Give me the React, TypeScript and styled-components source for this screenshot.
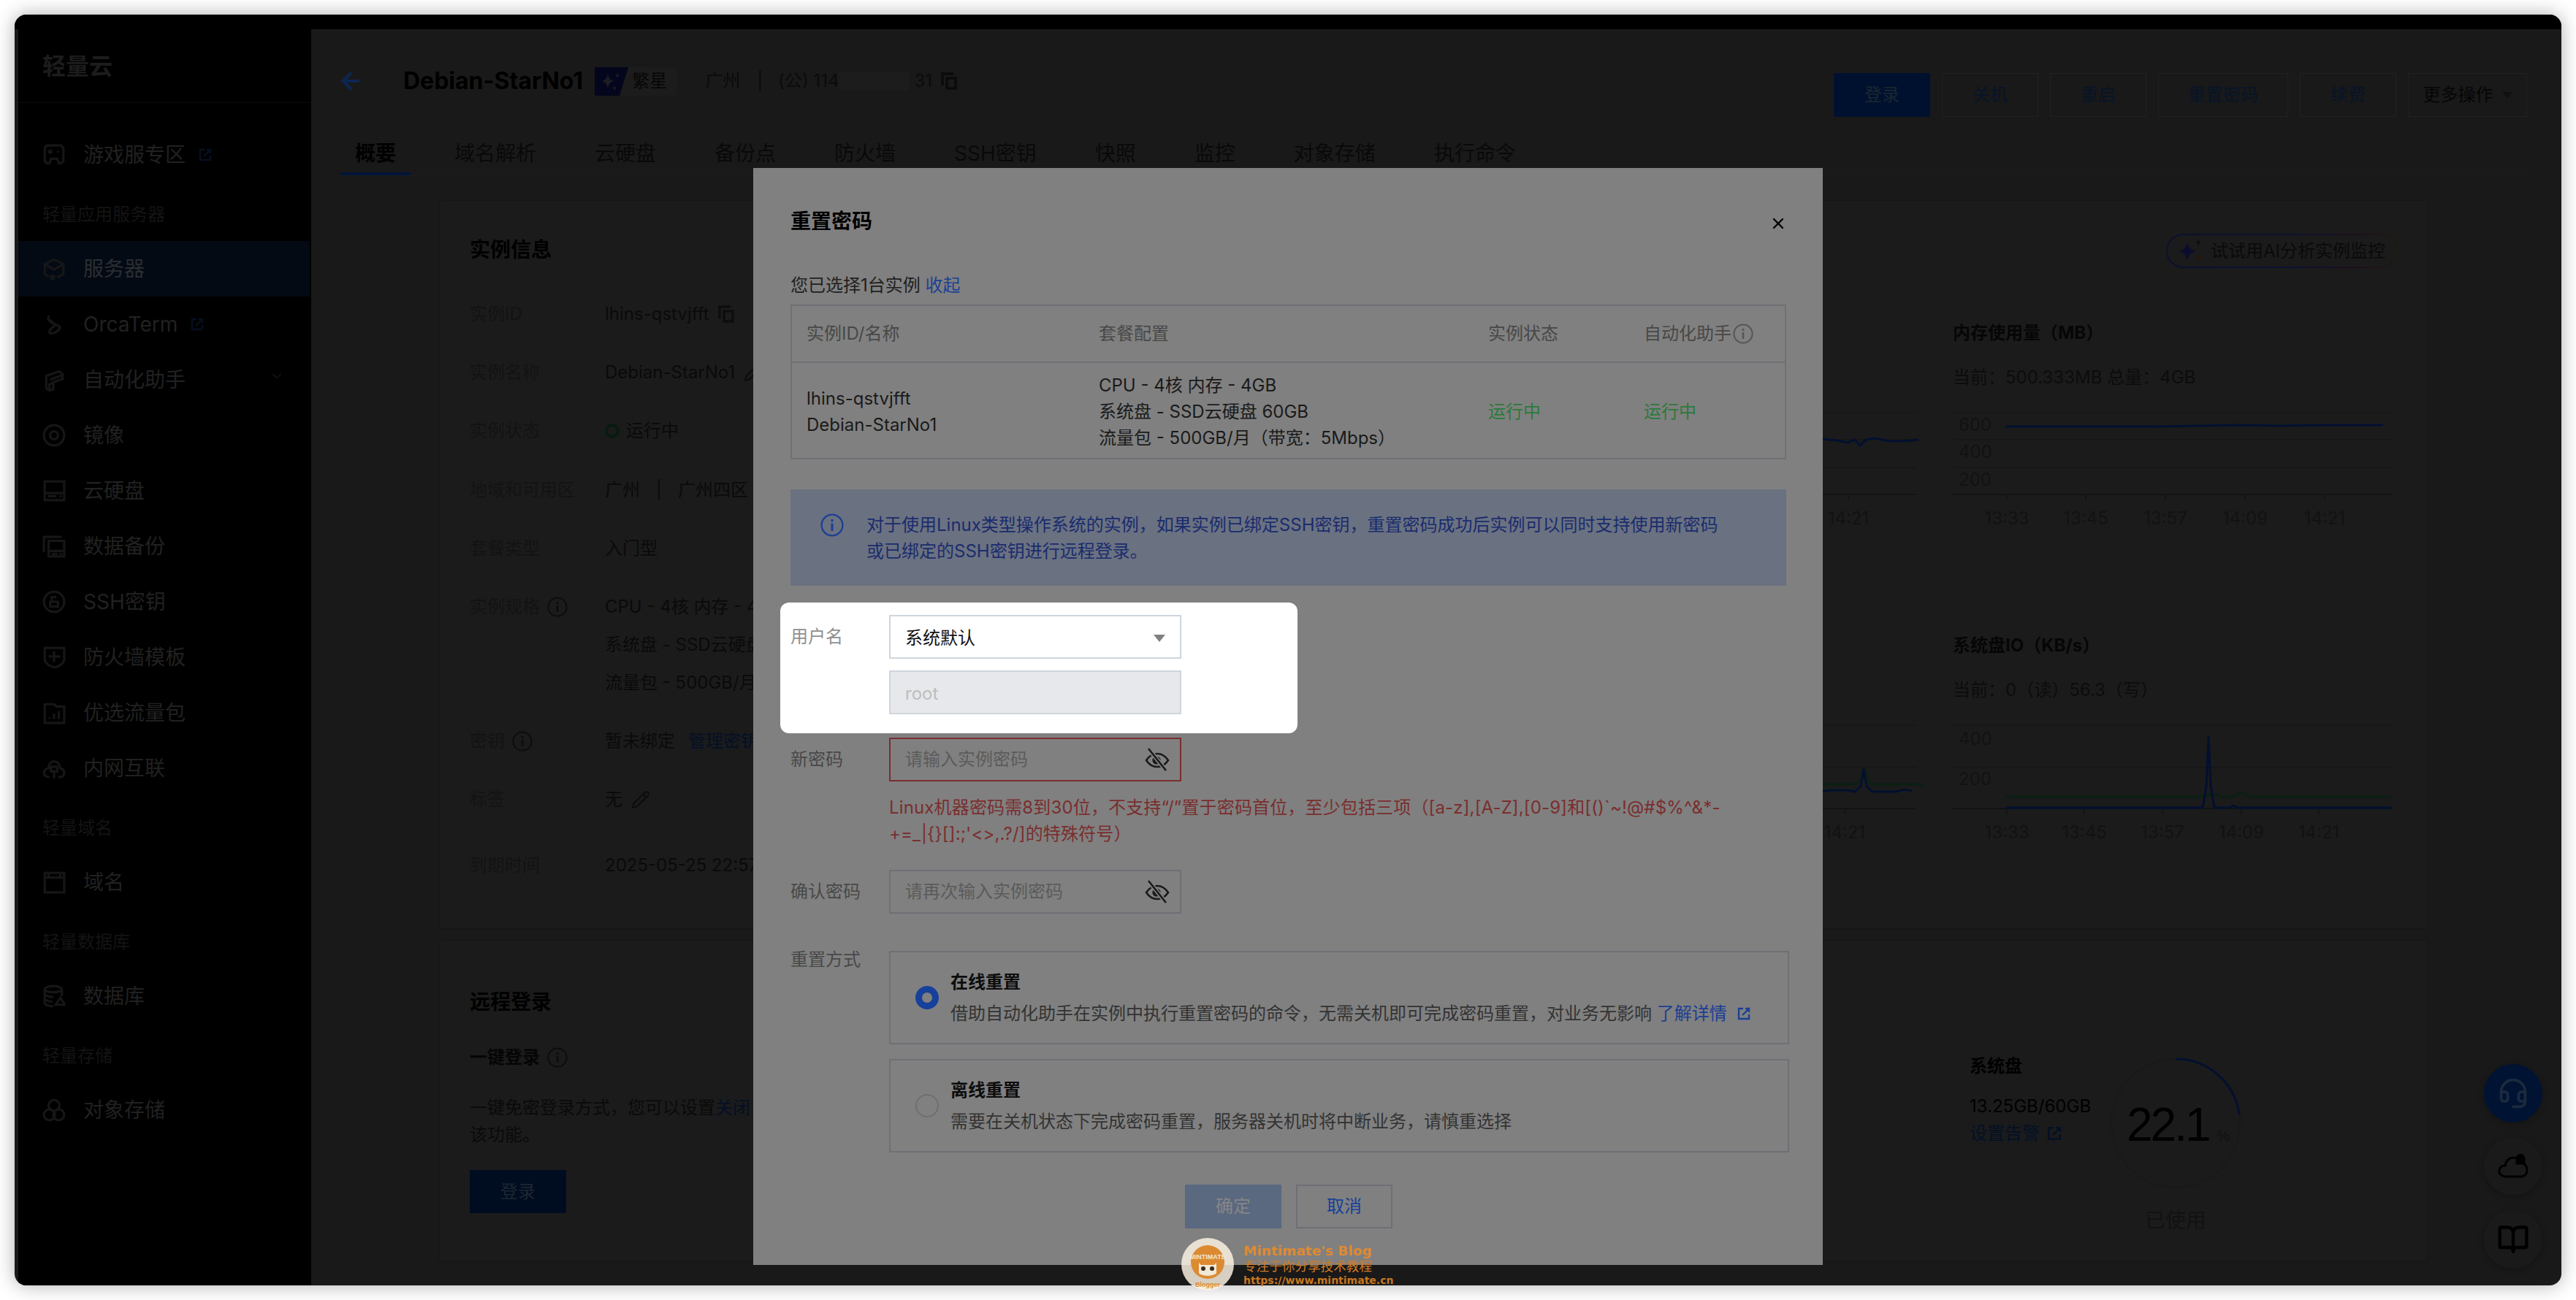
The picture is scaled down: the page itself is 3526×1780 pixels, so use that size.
import React from "react";
import styled, { createGlobalStyle } from "styled-components";
import { ArrowLeft, BookOpen, ChevronDown, Headset, Pencil, X } from "lucide-react";

const GlobalStyle = createGlobalStyle`
  html, body {
    margin: 0;
    padding: 0;
    background: #fff;
    overflow: hidden;
  }
  * { box-sizing: border-box; }
  #root {
    font-family: "Inter", "Noto Sans CJK SC", sans-serif;
    font-size: 24px;
    line-height: 36px;
  }
`;

type IconName =
  | "game" | "server" | "orca" | "auto" | "mirror" | "disk" | "backup" | "ssh"
  | "firewall" | "traffic" | "intranet" | "domain" | "db" | "oss";

function NavGlyph({ name }: { name: IconName }) {
  const body: Record<IconName, React.ReactNode> = {
    game: (
      <>
        <path d="M6 3h18l3 3v17l-3 3h-3l-2-6h-8l-2 6H6l-3-3V6z" />
        <path d="M7 11h6M10 8v6M20 10v2" />
      </>
    ),
    server: (
      <>
        <path d="M8 25l-5-3V9l12-6 12 6v13l-8 4" />
        <path d="M3 9l12 7 12-7" />
        <circle cx="13" cy="26" r="2" />
      </>
    ),
    orca: <path d="M9 4c-3 3-1 7 3 9l9 4c3 2 1 5-2 7-4 3-10 4-10 1 0-3 5-7 8-9l-8-7" />,
    auto: (
      <>
        <path d="M5 10l17-6 4 4v6l-12 4v9l-5 2-4-3V10z" />
        <path d="M10 15l16-6M14 19l-5 2v7" />
      </>
    ),
    mirror: (
      <>
        <circle cx="15" cy="15" r="13" />
        <circle cx="15" cy="15" r="5" />
      </>
    ),
    disk: (
      <>
        <rect x="3" y="3" width="25" height="24" />
        <path d="M3 18h25M7 22h11M22 22h3" />
      </>
    ),
    backup: (
      <>
        <path d="M2 22V3h23" />
        <rect x="8" y="8" width="20" height="20" />
        <path d="M8 21h20M12 25h7M22 25h3" />
      </>
    ),
    ssh: (
      <>
        <circle cx="15" cy="15" r="13" />
        <path d="M12 14V9h6M10 15h10v6H10z" />
      </>
    ),
    firewall: (
      <>
        <path d="M3 3h25v14c0 6-7 10-12 11C10 27 3 23 3 17z" />
        <path d="M8 14h15M15 7v14" />
      </>
    ),
    traffic: (
      <>
        <path d="M3 4h12l3 3h10v21H3z" />
        <path d="M9 23v-2M15 23v-7M21 23V13" />
      </>
    ),
    intranet: (
      <>
        <path d="M9 26H7c-7-2-6-10 1-11 0-12 14-12 15 0 6 1 7 9 1 11h-4" />
        <rect x="11" y="13" width="8" height="6" />
        <path d="M15 19v9" />
      </>
    ),
    domain: (
      <>
        <rect x="3" y="3" width="25" height="25" />
        <path d="M3 9h25M8 3v6M23 3v6" />
      </>
    ),
    db: (
      <>
        <ellipse cx="14" cy="6" rx="11" ry="4" />
        <path d="M3 6v18c0 2 5 4 11 4M25 6v9M3 12c0 2 5 4 11 4M3 18c0 2 5 4 10 4" />
        <path d="M23 17l6 9H17z" />
      </>
    ),
    oss: (
      <>
        <circle cx="15" cy="9" r="7" />
        <circle cx="9" cy="21" r="7" />
        <circle cx="21" cy="21" r="7" />
      </>
    ),
  };
  return (
    <GlyphSvg viewBox="0 0 30 30">{body[name]}</GlyphSvg>
  );
}

function LinkOut({ size = 18 }: { size?: number }) {
  return (
    <svg width={size} height={size} viewBox="0 0 18 18" fill="none" stroke="currentColor" strokeWidth="2.4">
      <path d="M8 2H2v14h14v-6" />
      <path d="M7 11l9-9M11 2h5v5" />
    </svg>
  );
}

function CopyGlyph() {
  return (
    <svg width="22" height="24" viewBox="0 0 22 24" fill="none" stroke="currentColor" strokeWidth="3.4">
      <path d="M2 18V2h15" />
      <rect x="8" y="8" width="12" height="14" />
    </svg>
  );
}

function InfoDot({ size = 28 }: { size?: number }) {
  return (
    <svg width={size} height={size} viewBox="0 0 28 28" fill="none" stroke="currentColor" strokeWidth="2">
      <circle cx="14" cy="14" r="12.6" />
      <path d="M14 12v9" strokeWidth="2.6" />
      <path d="M14 7v3" strokeWidth="2.6" />
    </svg>
  );
}

function EyeSlash() {
  return (
    <svg width="34" height="34" viewBox="0 0 34 34" fill="none" stroke="#1a1a1a" strokeWidth="2.6">
      <path d="M2 18c4-6 9-9 15-9s11 3 15 9c-4 6-9 9-15 9s-11-3-15-9z" />
      <circle cx="16" cy="18" r="5.6" fill="#1a1a1a" stroke="none" />
      <path d="M5 2l24 30" stroke="#808080" strokeWidth="6" />
      <path d="M5 2l24 30" />
    </svg>
  );
}

type NavEntry =
  | { kind: "group"; label: string }
  | { kind: "item"; label: string; icon: IconName; active?: boolean; out?: boolean; more?: boolean };

const nav: NavEntry[] = [
  { kind: "item", label: "游戏服专区", icon: "game", out: true },
  { kind: "group", label: "轻量应用服务器" },
  { kind: "item", label: "服务器", icon: "server", active: true },
  { kind: "item", label: "OrcaTerm", icon: "orca", out: true },
  { kind: "item", label: "自动化助手", icon: "auto", more: true },
  { kind: "item", label: "镜像", icon: "mirror" },
  { kind: "item", label: "云硬盘", icon: "disk" },
  { kind: "item", label: "数据备份", icon: "backup" },
  { kind: "item", label: "SSH密钥", icon: "ssh" },
  { kind: "item", label: "防火墙模板", icon: "firewall" },
  { kind: "item", label: "优选流量包", icon: "traffic" },
  { kind: "item", label: "内网互联", icon: "intranet" },
  { kind: "group", label: "轻量域名" },
  { kind: "item", label: "域名", icon: "domain" },
  { kind: "group", label: "轻量数据库" },
  { kind: "item", label: "数据库", icon: "db" },
  { kind: "group", label: "轻量存储" },
  { kind: "item", label: "对象存储", icon: "oss" },
];

const tabs = ["概要", "域名解析", "云硬盘", "备份点", "防火墙", "SSH密钥", "快照", "监控", "对象存储", "执行命令"];

function Sidebar() {
  return (
    <SideBar>
      <Brand>轻量云</Brand>
      <NavList>
        {nav.map((entry) =>
          entry.kind === "group" ? (
            <NavGroup key={entry.label}>{entry.label}</NavGroup>
          ) : (
            <NavItem key={entry.label} $active={entry.active}>
              <NavGlyph name={entry.icon} />
              {entry.label}
              {entry.out && (
                <NavOut>
                  <LinkOut />
                </NavOut>
              )}
              {entry.more && (
                <NavMore>
                  <ChevronDown size={22} strokeWidth={2} />
                </NavMore>
              )}
            </NavItem>
          )
        )}
      </NavList>
    </SideBar>
  );
}

function PageHeader() {
  return (
    <HeaderRow>
      <HeaderLeft>
        <BackArrow>
          <ArrowLeft size={36} strokeWidth={2.8} />
        </BackArrow>
        <InstanceName>Debian-StarNo1</InstanceName>
        <StarBadge>
          <svg width="46" height="39" viewBox="0 0 46 39">
            <polygon points="0,0 46,0 34,39 0,39" fill="#03061c" />
            <path d="M18 8c1 7 3 10 9 11-6 1-8 4-9 11-1-7-3-10-9-11 6-1 8-4 9-11z" fill="#1c1c22" />
            <path d="M31 7c.5 3 1 4 3 4.500-2 .5-2.500 1.500-3 4.500-.5-3-1-4-3-4.500 2-.5 2.500-1.500 3-4.500z" fill="#1c1c22" />
            <path d="M27 24c.5 3 1 4 3 4.500-2 .5-2.500 1.500-3 4.500-.5-3-1-4-3-4.500 2-.5 2.500-1.500 3-4.500z" fill="#1c1c22" />
          </svg>
          <BadgeLabel>繁星</BadgeLabel>
        </StarBadge>
        <HeaderMeta>广州</HeaderMeta>
        <HeaderPipe>|</HeaderPipe>
        <HeaderMeta>(公) 114</HeaderMeta>
        <IpMask />
        <HeaderMeta>31</HeaderMeta>
        <HeaderCopy>
          <CopyGlyph />
        </HeaderCopy>
      </HeaderLeft>
      <HeaderActions>
        <ActionButton $primary>登录</ActionButton>
        <ActionButton>关机</ActionButton>
        <ActionButton>重启</ActionButton>
        <ActionButton $wide>重置密码</ActionButton>
        <ActionButton>续费</ActionButton>
        <MoreButton>
          更多操作
          <MoreCaret />
        </MoreButton>
      </HeaderActions>
    </HeaderRow>
  );
}

function InstanceInfo() {
  return (
    <InfoColumn>
      <CardTitle>实例信息</CardTitle>
      <InfoRows>
        <InfoRow>
          <InfoLabel>实例ID</InfoLabel>
          <InfoValue>
            lhins-qstvjfft
            <InlineIcon>
              <CopyGlyph />
            </InlineIcon>
          </InfoValue>
        </InfoRow>
        <InfoRow>
          <InfoLabel>实例名称</InfoLabel>
          <InfoValue>
            Debian-StarNo1
            <InlineIcon>
              <Pencil size={26} strokeWidth={2} />
            </InlineIcon>
          </InfoValue>
        </InfoRow>
        <InfoRow>
          <InfoLabel>实例状态</InfoLabel>
          <InfoValue>
            <StatusRing />
            运行中
          </InfoValue>
        </InfoRow>
        <InfoRow>
          <InfoLabel>地域和可用区</InfoLabel>
          <InfoValue>
            广州<RegionPipe>|</RegionPipe>广州四区
          </InfoValue>
        </InfoRow>
        <InfoRow>
          <InfoLabel>套餐类型</InfoLabel>
          <InfoValue>入门型</InfoValue>
        </InfoRow>
        <InfoRow>
          <InfoLabel>
            实例规格
            <LabelInfo>
              <InfoDot />
            </LabelInfo>
          </InfoLabel>
          <SpecLines>
            <InfoValue>CPU - 4核 内存 - 4GB</InfoValue>
            <InfoValue>系统盘 - SSD云硬盘 60GB</InfoValue>
            <InfoValue>流量包 - 500GB/月（带宽：5Mbps）</InfoValue>
          </SpecLines>
        </InfoRow>
        <InfoRow>
          <InfoLabel>
            密钥
            <LabelInfo>
              <InfoDot />
            </LabelInfo>
          </InfoLabel>
          <InfoValue>
            暂未绑定<DarkLink>管理密钥</DarkLink>
          </InfoValue>
        </InfoRow>
        <TagRow>
          <InfoLabel>标签</InfoLabel>
          <InfoValue>
            无
            <InlineIcon>
              <Pencil size={26} strokeWidth={2} />
            </InlineIcon>
          </InfoValue>
        </TagRow>
        <InfoRow>
          <InfoLabel>到期时间</InfoLabel>
          <InfoValue>2025-05-25 22:57:10</InfoValue>
        </InfoRow>
      </InfoRows>
    </InfoColumn>
  );
}

function Axis({ ticks, y, lines }: { ticks: [number, string][]; y: number; lines: number[] }) {
  return (
    <>
      {lines.map((l) => (
        <line key={l} x1="0" x2="601" y1={l} y2={l} stroke="#171717" strokeWidth="1.5" />
      ))}
      <line x1="0" x2="601" y1={y} y2={y} stroke="#131313" strokeWidth="2" />
      {ticks.map(([x, label]) => (
        <g key={label}>
          <line x1={x} x2={x} y1={y} y2={y + 8} stroke="#131313" strokeWidth="1.5" />
          <ChartText x={x} y={y + 41} textAnchor="middle">
            {label}
          </ChartText>
        </g>
      ))}
    </>
  );
}

function ChartBlock({ title, sub, children }: { title?: string; sub?: string; children: React.ReactNode }) {
  return (
    <ChartWrap>
      <ChartTitle>{title ?? "\u00a0"}</ChartTitle>
      <ChartSub>{sub ?? "\u00a0"}</ChartSub>
      <ChartSvg viewBox="0 0 601 165">{children}</ChartSvg>
    </ChartWrap>
  );
}

const memTicks: [number, string][] = [
  [74, "13:33"],
  [182, "13:45"],
  [291, "13:57"],
  [400, "14:09"],
  [509, "14:21"],
];
const ioTicks: [number, string][] = [
  [74, "13:33"],
  [180, "13:45"],
  [287, "13:57"],
  [395, "14:09"],
  [501, "14:21"],
];

function MonitorColumn() {
  return (
    <MonitorWrap>
      <AiRow>
        <AiPill>
          <svg width="36" height="36" viewBox="0 0 36 36">
            <path d="M13 5c1.500 8 4 11 12 13-8 2-10.500 5-12 13-1.500-8-4-11-12-13 8-2 10.500-5 12-13z" fill="#0a0d2e" />
            <path d="M28 1c.6 3 1.500 4 4 5-2.500.6-3.400 2-4 5-.6-3-1.500-4.400-4-5 2.500-1 3.400-2 4-5z" fill="#0d0d14" />
            <path d="M30 22c.6 3 1.500 4 4 5-2.500.6-3.400 2-4 5-.6-3-1.500-4.400-4-5 2.500-1 3.400-2 4-5z" fill="#2a1408" />
          </svg>
          试试用AI分析实例监控
        </AiPill>
      </AiRow>
      <ChartGrid>
        <ChartBlock>
          <Axis lines={[0, 37, 75]} y={112} ticks={[[508, "14:21"]]} />
          <ChartLine $color="#021030" d="M60 36H472l20 2 15 3 10-4 7 8 8-8 12-2 20 4 20 0 20-2" />
        </ChartBlock>
        <ChartBlock title="内存使用量（MB）" sub="当前：500.333MB 总量：4GB">
          <Axis lines={[0, 37, 75]} y={112} ticks={memTicks} />
          <ChartText x="8" y="25">600</ChartText>
          <ChartText x="8" y="62">400</ChartText>
          <ChartText x="8" y="100">200</ChartText>
          <ChartLine $color="#021030" d="M72 19H200l80 0 60-1 50-1 60 1 60-1 60 0 19 0" />
        </ChartBlock>
        <ChartBlock>
          <Axis lines={[0, 58]} y={114} ticks={[[503, "14:21"]]} />
          <ChartLine $color="#0a2012" d="M60 81H470l35 0 15-1 6-6 4-14 4 14 6 7h64l6 3" />
          <ChartLine $color="#021030" d="M60 90H475l12-1 20 0 10 2 8-8 4-23 4 23 6 7 6 1h28l12-3 10 2" />
        </ChartBlock>
        <ChartBlock title="系统盘IO（KB/s）" sub="当前：0（读）56.3（写）">
          <Axis lines={[0, 58]} y={114} ticks={ioTicks} />
          <ChartText x="8" y="27">400</ChartText>
          <ChartText x="8" y="82">200</ChartText>
          <ChartLine $color="#0a2012" d="M72 98H340l12-3 8 0 10 3 15 0 10-7 10 7H601" />
          <ChartLine $color="#021030" d="M72 113H342l5-30 3-68 3 68 5 30h20l6-3 6 3H601" />
        </ChartBlock>
      </ChartGrid>
    </MonitorWrap>
  );
}

function RemoteCard() {
  return (
    <LowerCard>
      <RemoteColumn>
        <CardTitle>远程登录</CardTitle>
        <RemoteHead>
          一键登录
          <LabelInfo>
            <InfoDot />
          </LabelInfo>
        </RemoteHead>
        <RemoteDesc>
          一键免密登录方式，您可以设置<DarkInline>关闭</DarkInline>
          <br />
          该功能。
        </RemoteDesc>
        <LoginButton>登录</LoginButton>
      </RemoteColumn>
      <DiskPanel>
        <DiskInfo>
          <DiskTitle>系统盘</DiskTitle>
          <DiskSize>13.25GB/60GB</DiskSize>
          <DiskLink>
            设置告警
            <LinkOut size={20} />
          </DiskLink>
        </DiskInfo>
        <GaugeColumn>
          <GaugeBox>
            <svg width="180" height="180" viewBox="0 0 180 180" fill="none">
              <circle cx="90" cy="90" r="88" stroke="#191919" strokeWidth="2" />
              <path d="M90 2A88 88 0 0 1 177.300 78" stroke="#021030" strokeWidth="3" />
            </svg>
            <GaugeValue>
              22.1<GaugeUnit>%</GaugeUnit>
            </GaugeValue>
          </GaugeBox>
          <GaugeCaption>已使用</GaugeCaption>
        </GaugeColumn>
      </DiskPanel>
    </LowerCard>
  );
}

function ResetDialog() {
  return (
    <Dialog>
      <DialogHead>
        <DialogTitle>重置密码</DialogTitle>
        <CloseMark>
          <X size={24} strokeWidth={2.4} />
        </CloseMark>
      </DialogHead>
      <PickedLine>
        您已选择1台实例 <BlueLink>收起</BlueLink>
      </PickedLine>
      <PickedTable>
        <HeadCell>实例ID/名称</HeadCell>
        <HeadCell>套餐配置</HeadCell>
        <HeadCell>实例状态</HeadCell>
        <HeadCell>
          自动化助手
          <HeadInfo>
            <InfoDot />
          </HeadInfo>
        </HeadCell>
        <BodyCell>
          <div>lhins-qstvjfft</div>
          <div>Debian-StarNo1</div>
        </BodyCell>
        <BodyCell>
          <div>CPU - 4核 内存 - 4GB</div>
          <div>系统盘 - SSD云硬盘 60GB</div>
          <div>流量包 - 500GB/月（带宽：5Mbps）</div>
        </BodyCell>
        <BodyCell $ok>运行中</BodyCell>
        <BodyCell $ok>运行中</BodyCell>
      </PickedTable>
      <Notice>
        <NoticeIcon>
          <InfoDot size={32} />
        </NoticeIcon>
        <div>
          对于使用Linux类型操作系统的实例，如果实例已绑定SSH密钥，重置密码成功后实例可以同时支持使用新密码
          <br />
          或已绑定的SSH密钥进行远程登录。
        </div>
      </Notice>
      <Spotlight>
        <FieldLabel $light>用户名</FieldLabel>
        <FieldStack>
          <SelectBox>
            系统默认
            <SelectCaret />
          </SelectBox>
          <DisabledBox>root</DisabledBox>
        </FieldStack>
      </Spotlight>
      <FormRow>
        <FieldLabel>新密码</FieldLabel>
        <InputBox $error>
          请输入实例密码
          <EyeSlash />
        </InputBox>
      </FormRow>
      <ErrorText>
        Linux机器密码需8到30位，不支持“/”置于密码首位，至少包括三项（[a-z],[A-Z],[0-9]和[()`~!@#$%^&*-
        <br />
        +=_|{"{}"}[]:;'&lt;&gt;,.?/]的特殊符号）
      </ErrorText>
      <ConfirmRow>
        <FieldLabel>确认密码</FieldLabel>
        <InputBox>
          请再次输入实例密码
          <EyeSlash />
        </InputBox>
      </ConfirmRow>
      <ModeRow>
        <ModeLabel>重置方式</ModeLabel>
        <ModeList>
          <ModeCard>
            <RadioMark $on />
            <div>
              <ModeName>在线重置</ModeName>
              <ModeDesc>
                借助自动化助手在实例中执行重置密码的命令，无需关机即可完成密码重置，对业务无影响
                <BlueLink> 了解详情</BlueLink>
                <ModeOut>
                  <LinkOut />
                </ModeOut>
              </ModeDesc>
            </div>
          </ModeCard>
          <ModeCard>
            <RadioMark />
            <div>
              <ModeName>离线重置</ModeName>
              <ModeDesc>需要在关机状态下完成密码重置，服务器关机时将中断业务，请慎重选择</ModeDesc>
            </div>
          </ModeCard>
        </ModeList>
      </ModeRow>
      <DialogFooter>
        <OkButton>确定</OkButton>
        <CancelButton>取消</CancelButton>
      </DialogFooter>
    </Dialog>
  );
}

export default function App() {
  return (
    <Page>
      <GlobalStyle />
      <AppWindow>
        <TopStrip />
        <Body>
          <Sidebar />
          <Main>
            <PageHeader />
            <TabBar>
              {tabs.map((t, i) => (
                <Tab key={t} $active={i === 0}>
                  {t}
                </Tab>
              ))}
            </TabBar>
            <Content>
              <UpperCard>
                <InstanceInfo />
                <MonitorColumn />
              </UpperCard>
              <RemoteCard />
            </Content>
          </Main>
        </Body>
        <ResetDialog />
        <FloatStack>
          <FloatButton $primary>
            <Headset size={44} strokeWidth={2} color="#1b2a3d" />
          </FloatButton>
          <FloatButton>
            <svg width="44" height="44" viewBox="0 0 44 44" fill="none" stroke="#000" strokeWidth="3">
              <path d="M13 36C5 36 2 31 3 27c1-4 4-6 8-6 1-7 6-11 12-11 2 0 4 .5 6 1.500M31 17c6 0 10 4 10 10 0 5-3 9-9 9H13" />
              <path d="M27 13c0-4 2-7 5-7s5 3 5 7v5H27z" fill="#000" />
            </svg>
          </FloatButton>
          <FloatButton>
            <BookOpen size={44} strokeWidth={2.4} color="#000" />
          </FloatButton>
        </FloatStack>
      </AppWindow>
      <Watermark>
        <svg width="72" height="72" viewBox="0 0 72 72">
          <circle cx="36" cy="36" r="36" fill="rgba(250,242,226,0.84)" />
          <circle cx="36" cy="33" r="23" fill="#dc8a32" />
          <text x="36" y="29" textAnchor="middle" fontSize="9" fontWeight="700" fill="#f1e8d8" fontFamily="Liberation Sans, sans-serif">
            MINTIMATE
          </text>
          <path d="M24 34l3 3h18l3-3v14c-4 5-20 5-24 0z" fill="#f1e8d8" />
          <circle cx="30" cy="42" r="3" fill="#3a2a1a" />
          <circle cx="42" cy="42" r="3" fill="#3a2a1a" />
          <text x="36" y="67" textAnchor="middle" fontSize="9" fontWeight="700" fill="#dc8a32" fontFamily="Liberation Sans, sans-serif">
            Blogger
          </text>
        </svg>
        <WatermarkText>
          <WatermarkName>Mintimate's Blog</WatermarkName>
          <WatermarkSlogan>专注于你分享技术教程</WatermarkSlogan>
          <WatermarkUrl>https://www.mintimate.cn</WatermarkUrl>
        </WatermarkText>
      </Watermark>
    </Page>
  );
}

const Page = styled.div`
  position: relative;
  width: 3526px;
  height: 1780px;
  padding: 20px;
  background: #fff;
  overflow: hidden;
`;

const AppWindow = styled.div`
  position: relative;
  width: 3486px;
  height: 1740px;
  border-radius: 16px;
  background: #191919;
  box-shadow: 0 0 26px rgba(0, 0, 0, 0.32);
  overflow: hidden;
  display: flex;
  flex-direction: column;
`;

const TopStrip = styled.div`
  height: 20px;
  flex: none;
  background: #000;
`;

const Body = styled.div`
  flex: 1;
  display: flex;
  padding-left: 5px;
  min-height: 0;
`;

const SideBar = styled.aside`
  width: 401px;
  flex: none;
  background: #000;
`;

const Brand = styled.div`
  height: 101px;
  padding: 2px 0 0 33px;
  display: flex;
  align-items: center;
  font-size: 32px;
  font-weight: 700;
  color: #1c1c1c;
  border-bottom: 1px solid #0a0a0a;
`;

const NavList = styled.nav`
  margin-top: 33px;
`;

const NavGroup = styled.div`
  height: 80px;
  padding: 26px 0 0 33px;
  font-size: 24px;
  color: #141414;
`;

const NavItem = styled.div<{ $active?: boolean }>`
  position: relative;
  height: 76px;
  width: 399px;
  padding-left: 33px;
  display: flex;
  align-items: center;
  gap: 24px;
  font-size: 28px;
  color: ${(p) => (p.$active ? "#2b2e33" : "#212121")};
  background: ${(p) => (p.$active ? "#040a14" : "transparent")};
`;

const GlyphSvg = styled.svg`
  width: 32px;
  height: 32px;
  flex: none;
  fill: none;
  stroke: #161616;
  stroke-width: 3;
`;

const NavOut = styled.span`
  display: flex;
  margin-left: -6px;
  color: #060f20;
`;

const NavMore = styled.span`
  position: absolute;
  right: 34px;
  top: 22px;
  display: flex;
  color: #0f0f0f;
`;

const Main = styled.main`
  flex: 1;
  min-width: 0;
  padding: 0 47px 0 40px;
`;

const HeaderRow = styled.div`
  display: flex;
  justify-content: space-between;
  align-items: flex-start;
  padding-top: 50px;
`;

const HeaderLeft = styled.div`
  display: flex;
  align-items: center;
  height: 40px;
  padding-top: 2px;
  color: #0b0b0b;
`;

const BackArrow = styled.span`
  display: flex;
  width: 88px;
  margin-left: -4px;
  color: #0c2650;
`;

const InstanceName = styled.span`
  font-size: 32px;
  font-weight: 700;
  color: #000;
  margin-right: 16px;
  margin-left: 2px;
`;

const StarBadge = styled.span`
  display: flex;
  align-items: center;
  width: 112px;
  height: 39px;
  background: #1c1c1c;
  margin-right: 39px;
`;

const BadgeLabel = styled.span`
  margin-left: 5px;
  font-size: 24px;
  color: #060606;
`;

const HeaderMeta = styled.span`
  font-size: 24px;
  color: #0b0b0b;
`;

const HeaderPipe = styled(HeaderMeta)`
  margin: 0 21px 0 23px;
`;

const IpMask = styled.span`
  width: 96px;
  height: 24px;
  margin: 0 7px 0 0;
  background: #1c1c1c;
`;

const HeaderCopy = styled.span`
  display: flex;
  margin-left: 12px;
  color: #0a0a0a;
`;

const HeaderActions = styled.div`
  display: flex;
  gap: 16px;
  margin-top: 10px;
`;

const ActionButton = styled.button<{ $primary?: boolean; $wide?: boolean }>`
  width: ${(p) => (p.$wide ? "178px" : "132px")};
  height: 60px;
  padding: 0;
  font: inherit;
  border: 1px solid ${(p) => (p.$primary ? "#00112f" : "#212121")};
  background: ${(p) => (p.$primary ? "#00112f" : "transparent")};
  color: ${(p) => (p.$primary ? "#1d2732" : "#071428")};
`;

const MoreButton = styled(ActionButton)`
  width: 163px;
  color: #060606;
  display: flex;
  align-items: center;
  justify-content: center;
  gap: 12px;
`;

const MoreCaret = styled.span`
  width: 0;
  height: 0;
  border-left: 7px solid transparent;
  border-right: 7px solid transparent;
  border-top: 9px solid #101010;
`;

const TabBar = styled.div`
  display: flex;
  gap: 40px;
  margin-top: 20px;
  border-bottom: 1px solid #1c1c1c;
`;

const Tab = styled.div<{ $active?: boolean }>`
  height: 60px;
  padding: 4px 20px 0;
  font-size: 28px;
  line-height: 52px;
  color: ${(p) => (p.$active ? "#000" : "#090909")};
  font-weight: ${(p) => (p.$active ? 600 : 400)};
  border-bottom: 4px solid ${(p) => (p.$active ? "#02153a" : "transparent")};
`;

const Content = styled.div`
  width: 2720px;
  margin: 34px 0 0 136px;
  display: flex;
  flex-direction: column;
  gap: 18px;
`;

const UpperCard = styled.section`
  height: 995px;
  padding: 47px 48px 0 41px;
  background: #1b1b1b;
  box-shadow: 0 0 3px rgba(0, 0, 0, 0.22);
  display: flex;
  justify-content: space-between;
`;

const CardTitle = styled.h2`
  margin: 0;
  font-size: 28px;
  line-height: 40px;
  font-weight: 700;
  color: #000;
`;

const InfoColumn = styled.div`
  width: 390px;
  overflow: hidden;
  white-space: nowrap;
`;

const InfoRows = styled.div`
  margin-top: 50px;
  display: flex;
  flex-direction: column;
  gap: 44.2px;
`;

const InfoRow = styled.div`
  display: grid;
  grid-template-columns: 185px 1fr;
  align-items: start;
`;

const TagRow = styled(InfoRow)`
  height: 45px;
`;

const InfoLabel = styled.div`
  display: flex;
  align-items: center;
  color: #131313;
`;

const LabelInfo = styled.span`
  display: flex;
  margin-left: 10px;
  color: #0d0d0d;
`;

const InfoValue = styled.div`
  display: flex;
  align-items: center;
  color: #0a0a0a;
`;

const RegionPipe = styled.span`
  margin: 0 22px;
`;

const InlineIcon = styled.span`
  display: flex;
  margin-left: 12px;
  color: #0d0d0d;
`;

const StatusRing = styled.span`
  width: 20px;
  height: 20px;
  margin-right: 9px;
  border-radius: 50%;
  border: 4px solid #061c0e;
`;

const SpecLines = styled.div`
  display: flex;
  flex-direction: column;
  gap: 16px;
`;

const DarkLink = styled.span`
  margin-left: 18px;
  color: #041026;
`;

const MonitorWrap = styled.div`
  width: 1252px;
`;

const AiRow = styled.div`
  display: flex;
  justify-content: flex-end;
  margin: -2px -8px 0 0;
`;

const AiPill = styled.div`
  width: 317px;
  height: 47px;
  padding-left: 14px;
  display: flex;
  align-items: center;
  gap: 9px;
  border-radius: 24px;
  border: 2px solid transparent;
  background: linear-gradient(#1b1b1b, #1b1b1b) padding-box,
    linear-gradient(90deg, #0a102e 0%, #0c1232 55%, #20101a 85%, #1e1a0e 100%) border-box;
  color: #0a0a0a;
  font-size: 24px;
  white-space: nowrap;
`;

const ChartGrid = styled.div`
  margin-top: 71px;
  display: grid;
  grid-template-columns: 601px 601px;
  column-gap: 50px;
  row-gap: 136px;
`;

const ChartWrap = styled.div`
  width: 601px;
`;

const ChartTitle = styled.div`
  font-weight: 700;
  color: #060606;
`;

const ChartSub = styled.div`
  margin-top: 25px;
  color: #0c0c0c;
`;

const ChartSvg = styled.svg`
  display: block;
  width: 601px;
  height: 165px;
  margin-top: 30px;
  overflow: visible;
`;

const ChartText = styled.text`
  font-family: "Inter", sans-serif;
  font-size: 24px;
  fill: #121212;
`;

const ChartLine = styled.path<{ $color: string }>`
  fill: none;
  stroke: ${(p) => p.$color};
  stroke-width: 3;
`;

const LowerCard = styled.section`
  height: 438px;
  padding: 64px 0 0 41px;
  background: #1b1b1b;
  box-shadow: 0 0 3px rgba(0, 0, 0, 0.22);
  display: flex;
  justify-content: space-between;
`;

const RemoteColumn = styled.div`
  width: 390px;
  white-space: nowrap;
`;

const RemoteHead = styled.div`
  margin-top: 38px;
  display: flex;
  align-items: center;
  font-weight: 700;
  color: #050505;
`;

const RemoteDesc = styled.div`
  margin-top: 32px;
  line-height: 37px;
  color: #0a0a0a;
`;

const DarkInline = styled.span`
  color: #041026;
`;

const LoginButton = styled.button`
  display: block;
  width: 132px;
  height: 59px;
  margin-top: 30px;
  padding: 0;
  border: 0;
  font: inherit;
  background: #000c20;
  color: #1d2732;
`;

const DiskPanel = styled.div`
  width: 669px;
  height: 258px;
  margin-top: 76px;
  padding-left: 42px;
  border-left: 1px solid #181818;
  display: flex;
`;

const DiskInfo = styled.div`
  width: 187px;
  flex: none;
  padding-top: 14px;
`;

const DiskTitle = styled.div`
  font-weight: 700;
  color: #000;
`;

const DiskSize = styled.div`
  margin-top: 19px;
  color: #000;
  white-space: nowrap;
`;

const DiskLink = styled.div`
  margin-top: 1px;
  display: flex;
  align-items: center;
  gap: 10px;
  color: #041026;
`;

const GaugeColumn = styled.div`
  width: 190px;
  padding-top: 20px;
  display: flex;
  flex-direction: column;
  align-items: center;
`;

const GaugeBox = styled.div`
  position: relative;
  width: 180px;
  height: 180px;
`;

const GaugeValue = styled.div`
  position: absolute;
  left: 23px;
  top: 54px;
  display: flex;
  align-items: baseline;
  font-family: "Liberation Sans", sans-serif;
  font-size: 64px;
  line-height: 76px;
  letter-spacing: -3px;
  color: #000;
`;

const GaugeUnit = styled.span`
  margin-left: 11px;
  font-size: 20px;
  letter-spacing: 0;
  color: #111;
`;

const GaugeCaption = styled.div`
  margin-top: 25px;
  font-size: 28px;
  color: #121212;
`;

const FloatStack = styled.div`
  position: absolute;
  right: 26px;
  bottom: 23px;
  display: flex;
  flex-direction: column;
  gap: 20px;
`;

const FloatButton = styled.div<{ $primary?: boolean }>`
  width: 80px;
  height: 80px;
  border-radius: 50%;
  display: flex;
  align-items: center;
  justify-content: center;
  background: ${(p) => (p.$primary ? "#001333" : "#1a1a1a")};
  box-shadow: 0 2px 8px rgba(0, 0, 0, 0.25);
`;

const Dialog = styled.div`
  position: absolute;
  left: 1011px;
  top: 210px;
  width: 1464px;
  height: 1502px;
  padding: 53px 50px 0 51px;
  background: #808080;
  color: #1a1a1a;
`;

const DialogHead = styled.div`
  display: flex;
  justify-content: space-between;
  align-items: center;
`;

const DialogTitle = styled.div`
  font-size: 28px;
  line-height: 40px;
  font-weight: 700;
  color: #000;
`;

const CloseMark = styled.span`
  display: flex;
  margin: 6px -1px 0 0;
  color: #000;
`;

const PickedLine = styled.div`
  margin-top: 50px;
  color: #202020;
`;

const BlueLink = styled.span`
  color: #1c3f94;
`;

const PickedTable = styled.div`
  margin-top: 8px;
  height: 212px;
  display: grid;
  grid-template-columns: 400px 533px 213px 1fr;
  grid-template-rows: 78px 1fr;
  border: 2px solid #6f6f75;
`;

const HeadCell = styled.div`
  display: flex;
  align-items: center;
  padding-left: 20px;
  border-bottom: 2px solid #6f6f75;
  color: #484848;
`;

const HeadInfo = styled.span`
  display: flex;
  margin-left: 2px;
  color: #555;
`;

const BodyCell = styled.div<{ $ok?: boolean }>`
  display: flex;
  flex-direction: column;
  justify-content: center;
  padding: 3px 0 0 20px;
  color: ${(p) => (p.$ok ? "#2b7a3b" : "#1a1a1a")};
`;

const Notice = styled.div`
  margin-top: 41px;
  height: 132px;
  padding: 31px 0 0 41px;
  display: flex;
  gap: 31px;
  background: #6a7180;
  color: #1a2c6e;
`;

const NoticeIcon = styled.span`
  display: flex;
  height: 36px;
  align-items: center;
  color: #1c3f94;
`;

const Spotlight = styled.div`
  margin: 23px 0 6px -14px;
  width: 708px;
  padding: 17px 14px 26px;
  display: flex;
  background: #fff;
  border-radius: 12px;
`;

const FormRow = styled.div`
  display: flex;
`;

const FieldLabel = styled.div<{ $light?: boolean }>`
  width: 135px;
  flex: none;
  padding-top: 12px;
  color: ${(p) => (p.$light ? "#8f8f8f" : "#484848")};
`;

const FieldStack = styled.div`
  display: flex;
  flex-direction: column;
  gap: 16px;
`;

const SelectBox = styled.div`
  position: relative;
  width: 400px;
  height: 60px;
  padding: 3px 0 0 20px;
  display: flex;
  align-items: center;
  border: 2px solid #cfd5de;
  color: #111;
`;

const SelectCaret = styled.span`
  position: absolute;
  right: 20px;
  top: 25px;
  width: 0;
  height: 0;
  border-left: 8px solid transparent;
  border-right: 8px solid transparent;
  border-top: 10px solid #808080;
`;

const DisabledBox = styled(SelectBox)`
  background: #e7e8eb;
  color: #bdbdbd;
`;

const InputBox = styled.div<{ $error?: boolean }>`
  width: 400px;
  height: 60px;
  padding: 0 14px 0 20px;
  display: flex;
  align-items: center;
  justify-content: space-between;
  border: 2px solid ${(p) => (p.$error ? "#7a2e2e" : "#6f6f75")};
  color: #5b5b5b;
`;

const ErrorText = styled.div`
  margin: 18px 0 0 135px;
  color: #7a2e2e;
  white-space: nowrap;
  letter-spacing: 0.15px;
`;

const ConfirmRow = styled(FormRow)`
  margin-top: 31px;
`;

const ModeRow = styled.div`
  margin-top: 51px;
  display: flex;
`;

const ModeLabel = styled.div`
  width: 135px;
  flex: none;
  margin-top: -6px;
  color: #484848;
`;

const ModeList = styled.div`
  width: 1232px;
  flex: none;
  display: flex;
  flex-direction: column;
  gap: 20px;
`;

const ModeCard = styled.div`
  height: 128px;
  padding-left: 34px;
  display: flex;
  align-items: center;
  gap: 16px;
  border: 2px solid #6f6f75;
`;

const RadioMark = styled.span<{ $on?: boolean }>`
  width: 32px;
  height: 32px;
  flex: none;
  border-radius: 50%;
  border: ${(p) => (p.$on ? "9px solid #17409a" : "2px solid #6f6f6f")};
`;

const ModeName = styled.div`
  font-weight: 700;
  color: #0d0d0d;
`;

const ModeDesc = styled.div`
  margin-top: 7px;
  color: #333;
  display: flex;
  align-items: center;
  white-space: pre;
`;

const ModeOut = styled.span`
  display: flex;
  margin-left: 14px;
  color: #1c3f94;
`;

const DialogFooter = styled.div`
  margin: 44px -1px 0 0;
  display: flex;
  justify-content: center;
  gap: 20px;
`;

const OkButton = styled.button`
  width: 132px;
  height: 60px;
  padding: 0;
  border: 0;
  font: inherit;
  background: #5a6880;
  color: #868686;
`;

const CancelButton = styled.button`
  width: 132px;
  height: 60px;
  padding: 0;
  font: inherit;
  background: transparent;
  border: 2px solid #6f6f75;
  color: #17409a;
`;

const Watermark = styled.div`
  position: absolute;
  left: 1617px;
  top: 1695px;
  display: flex;
  gap: 13px;
`;

const WatermarkText = styled.div`
  padding-top: 6px;
  white-space: nowrap;
  font-family: "DejaVu Sans", "Noto Sans CJK SC", sans-serif;
`;

const WatermarkName = styled.div`
  font-size: 18.5px;
  line-height: 23px;
  font-weight: 700;
  color: #df8a32;
`;

const WatermarkSlogan = styled.div`
  font-size: 17.6px;
  line-height: 21px;
  color: #cf7c26;
`;

const WatermarkUrl = styled.div`
  font-size: 14px;
  line-height: 17px;
  font-weight: 700;
  color: #c8761f;
`;
